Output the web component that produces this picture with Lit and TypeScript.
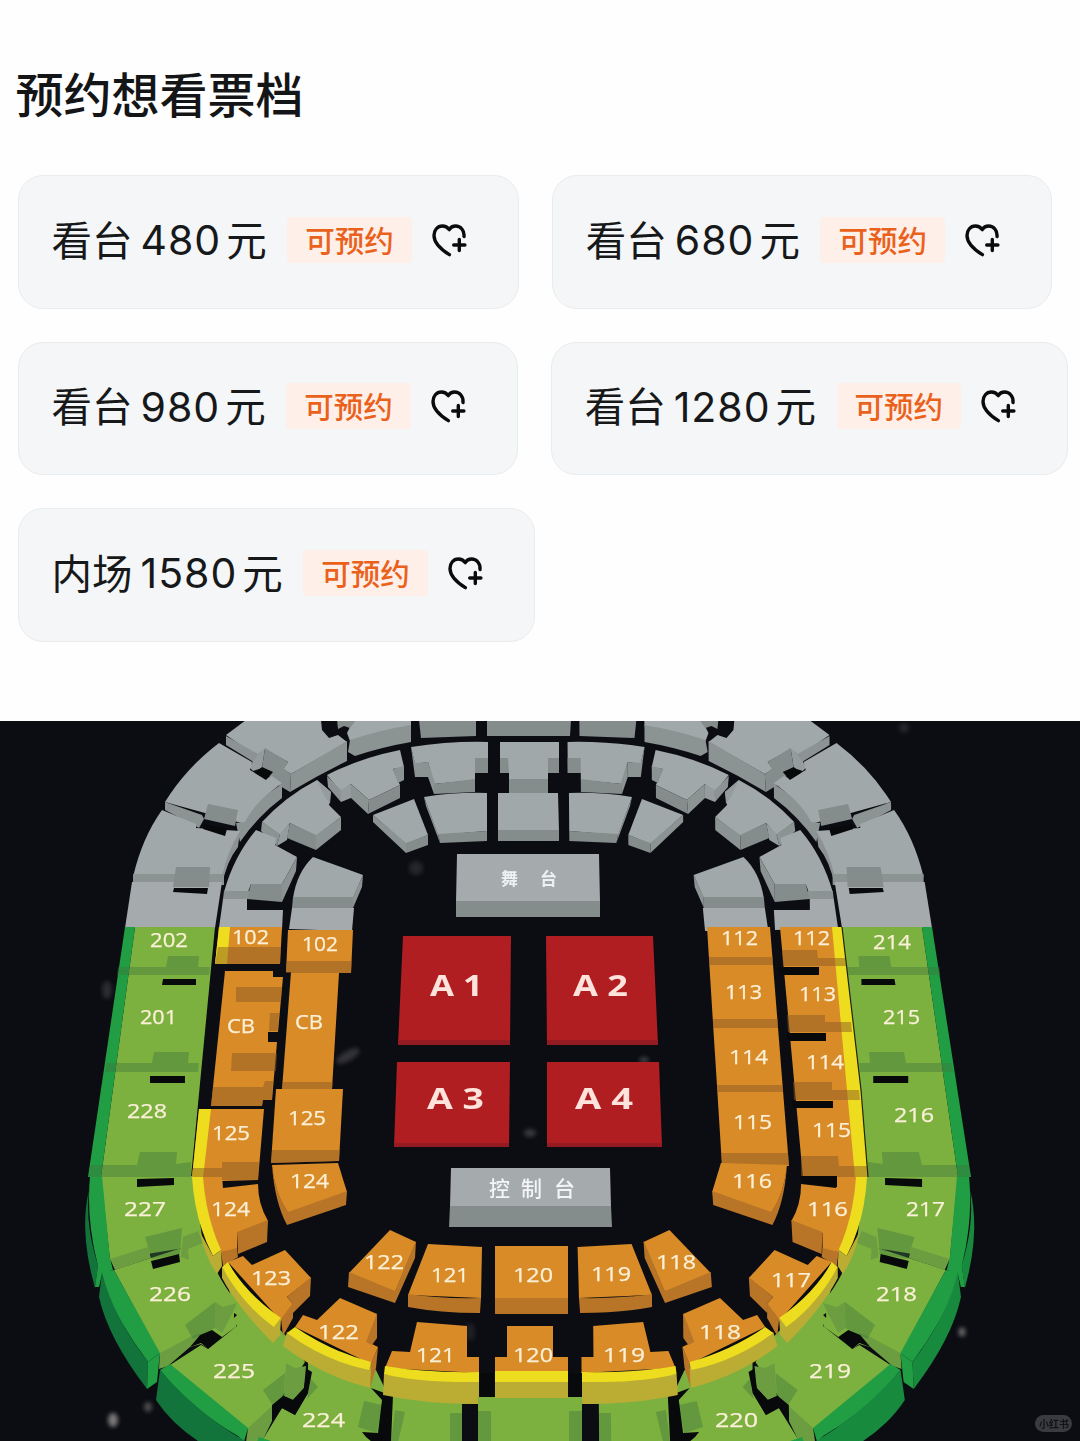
import { css, html, LitElement, svg } from 'lit';
import { customElement, property } from 'lit/decorators.js';

// [class, path]
type Shape = [string, string];
// [text, left, baseline, width]
type Label = [string, number, number, number];

// Everything that both sides of the arena share, drawn for the left side.
const HALF: Shape[] = [
    // outer ring, grey
    ['top', 'M226 735L246 720H321L322 730 329 738 338 735 347 742 291 774 283 769 288 762 265 749 258 757Z'],
    ['face', 'M226 736L258 754 261 751 257 768 252 761 226 745Z'],
    ['lit', 'M258 755L265 748 262 768 253 771 249 767Z'],
    ['dark', 'M265 748L288 762 284 769 291 774 290 792 275 783 262 768Z'],
    ['face', 'M291 774L347 741V761Q318 775 290 792Z'],
    ['top', 'M219 743L252 762 250 770 265 779 272 776 282 783Q256 802 245 824L165 802Q186 768 219 743Z'],
    ['hole', 'M262 767L273 772 266 780 255 773Z'],
    ['face', 'M165 802L202 815 204 819 199 828 165 810Z'],
    ['face', 'M282 784V798Q258 816 240 842L236 823 245 822Q256 800 282 784Z'],
    ['top', 'M162 810L196 824 196 828 240 831 223 877H133Q142 838 162 810Z'],
    ['dark', 'M208 804L238 810 235 826 204 819Z'],
    ['hole', 'M204 824L227 829 225 836 203 829Z'],
    ['face', 'M133 874H224V885H133Z'],
    ['face', 'M240 831L238 847Q226 862 222 886V876Q228 850 240 831Z'],
    ['floor', 'M132 882H222L215 928H125Z'],
    ['dark', 'M176 867H210L209 887H173Z'],
    ['hole', 'M174 888H208L207 894 173 892Z'],
    ['top', 'M353 721H411V726L350 741 347 733Z'],
    ['dark', 'M337 720H356L350 728 344 726 338 729Z'],
    ['face', 'M350 740Q380 730 411 725V742Q382 747 355 756L348 752Z'],
    ['dark', 'M419 720H476V736L421 738Z'],

    // middle ring, grey
    ['top', 'M327 775Q360 758 400 750L404 767 393 769 400 785 369 800 351 784 341 792Z'],
    ['face', 'M327 776L341 790V802L328 787Z'],
    ['lit', 'M341 790L351 784V798L341 802Z'],
    ['face', 'M351 784L369 800 368 814 351 798Z'],
    ['dark', 'M369 800L400 785V798L368 814Z'],
    ['face', 'M393 769L404 766V780L398 783Z'],
    ['top', 'M411 747Q450 741 488 742V773H475V780L434 784 428 762 415 764Z'],
    ['face', 'M411 747L415 763 428 762V777H415Z'],
    ['face', 'M428 762L435 783 434 794 428 777Z'],
    ['dark', 'M434 784L475 779V792L434 794Z'],
    ['dark', 'M475 758H488V773H475Z'],
    ['top', 'M317 780L331 792 329 805 341 817 316 836 290 823 280 835 262 822Q286 796 317 780Z'],
    ['face', 'M262 822L280 834 277 846 261 831Z'],
    ['lit', 'M280 834L290 823 287 840 277 846Z'],
    ['dark', 'M290 823L316 835V850L287 838Z'],
    ['face', 'M316 835L341 817V830L316 850Z'],
    ['lit', 'M317 780L331 792 330 804 325 797Z'],
    ['top', 'M256 830L276 838 275 845 297 857 282 884H251L248 892H224Q234 856 256 830Z'],
    ['face', 'M224 891H249V899H223Z'],
    ['dark', 'M251 884H282V902L247 899Z'],
    ['face', 'M297 857L296 871 282 902V884Z'],
    ['floor', 'M223 899H247V910H283L282 930 219 928Z'],

    // inner row, grey
    ['top', 'M414 799L428 835 406 844 373 815Z'],
    ['face', 'M373 815L406 843V853L373 822Z'],
    ['dark', 'M406 843L428 835V845L406 853Z'],
    ['top', 'M424 797Q455 792 487 793V831L438 835Z'],
    ['face', 'M424 797L438 834 440 843 426 806Z'],
    ['dark', 'M438 834L487 831V841L440 843Z'],
    ['top', 'M313 857L363 875 353 898H293Q297 872 313 857Z'],
    ['dark', 'M293 897H353V908H292Z'],
    ['face', 'M363 875L362 887 353 908V897Z'],
    ['floor', 'M292 908H354L352 931 289 929Z'],

    // outer ring, green column
    ['green', 'M135 927H215L191 1177H101Z'],
    ['rim', 'M125 927H135L101 1177H88Z'],
    ['shade', 'M118 967H166L168 956H199L198 967H210L209 975H117Z'],
    ['hole', 'M163 979H196V985H162Z'],
    ['shade', 'M107 1063H152L154 1052H189L188 1063H199L198 1072H105Z'],
    ['hole', 'M150 1076H185V1083H150Z'],

    // outer ring, green bend
    ['green', 'M101 1176H194L203 1245 110 1260Z'],
    ['rim', 'M90 1176H102L110 1259 98 1266Q86 1220 90 1176Z'],
    ['rim-face', 'M89 1190Q85 1225 98 1265L95 1288Q79 1232 89 1190Z'],
    ['rim', 'M98 1265L110 1258 113 1270 102 1274 99 1287 95 1287Z'],
    ['shade', 'M90 1165H137L140 1152H177L176 1164 191 1162V1177H89Z'],
    ['hole', 'M137 1179L174 1178V1185L137 1187Z'],
    ['green', 'M114 1270L203 1241Q220 1285 242 1308L235 1330 208 1349 201 1344 160 1355Z'],
    ['mild', 'M110 1259L148 1247 151 1258 115 1270Z'],
    ['shade', 'M145 1237L182 1228 180 1254 152 1259Z'],
    ['mild', 'M183 1237L198 1231 203 1243 188 1249 189 1260 181 1257Z'],
    ['hole', 'M151 1261L179 1254 180 1262 153 1269Z'],
    ['rim', 'M102 1272L114 1270 160 1353 148 1362Q118 1322 102 1283Z'],
    ['rim-face', 'M102 1272Q112 1315 148 1362L147 1389Q108 1338 99 1297Z'],
    ['rim', 'M148 1362L160 1353 157 1382 147 1389Z'],
    ['green', 'M170 1365L201 1345 208 1349 237 1326 226 1275 290 1340 305 1362 272 1412 248 1429Z'],
    ['mild', 'M160 1353L192 1336 201 1333 190 1347 168 1366 159 1369Z'],
    ['shade', 'M185 1325L215 1302V1328L193 1339Z'],
    ['mild', 'M215 1302L223 1307 237 1303 233 1312 222 1333 215 1328Z'],
    ['hole', 'M190 1347L200 1335 212 1330 222 1337 237 1326 208 1349 201 1343Z'],
    ['hole', 'M234 1313L237 1315 234 1318Z'],
    ['rim', 'M160 1370L170 1364 248 1428 244 1442 238 1436Q192 1410 160 1370Z'],
    ['rim-face', 'M160 1370Q197 1413 245 1441H198Q171 1423 156 1400Z'],
    ['mild', 'M248 1428L272 1406V1421L262 1442H246Z'],
    ['green', 'M262 1441L282 1408 295 1415 308 1393V1360L290 1345 376 1370 386 1391 380 1442Z'],
    ['rim', 'M259 1437L274 1442H257Z'],
    ['shade', 'M263 1390L285 1373 284 1397 272 1404Z'],
    ['mild', 'M286 1363L295 1368 306 1366 304 1388 293 1400 284 1396Z'],
    ['hole', 'M307 1369L312 1372 308 1393 295 1415 282 1408 272 1422V1405L283 1396 293 1400 304 1388Z'],
    ['shade', 'M311 1379L318 1387 307 1399Z'],
    ['shade', 'M364 1401L382 1405 377 1433 358 1427Z'],
    ['hole', 'M362 1432L378 1433 382 1400 371 1388 395 1397 391 1442H372L366 1437Z'],
    ['green', 'M393 1395L479 1398V1404H462V1442H391Z'],
    ['shade', 'M395 1410L405 1412 398 1442H391Z'],
    ['shade', 'M450 1413H462V1442H450Z'],

    // middle ring, orange bend with the yellow edge
    ['orange', 'M202 1176H222L223 1188 258 1184Q258 1204 268 1221L237 1233V1251L221 1252Q205 1215 202 1176Z'],
    ['amber', 'M237 1232L268 1220 267 1242 238 1254Z'],
    ['amber', 'M221 1252L237 1248 238 1257 223 1266Z'],
    ['yellow', 'M192 1177H203Q206 1217 221 1250L213 1256Q195 1222 192 1177Z'],
    ['olive', 'M213 1256L221 1250 222 1266 217 1274Q204 1255 200 1232Z'],
    ['orange', 'M228 1262L243 1256 252 1265 285 1250 311 1278 287 1297 293 1304 281 1321Z'],
    ['amber', 'M311 1277L310 1296 293 1313V1304L287 1297Z'],
    ['amber', 'M293 1303V1318L283 1336 281 1319Z'],
    ['olive', 'M222 1267Q243 1300 274 1326L281 1318 280 1335 273 1343Q238 1308 222 1278Z'],
    ['yellow', 'M222 1267L228 1262Q245 1293 281 1318L274 1327Q243 1305 222 1267Z'],
    ['orange', 'M295 1327L303 1315 317 1320 340 1298 377 1314 372 1344 378 1347 371 1364Z'],
    ['amber', 'M377 1313V1338L372 1345 366 1342Z'],
    ['amber', 'M378 1347L376 1368 370 1388 371 1363Z'],
    ['olive', 'M287 1332Q325 1360 371 1364L370 1388Q320 1375 283 1346Z'],
    ['yellow', 'M287 1333L295 1327Q330 1351 371 1362L369 1370Q325 1361 287 1333Z'],
    ['orange', 'M417 1322L467 1326V1357H479V1373L385 1368 392 1351 410 1352Z'],
    ['olive', 'M384 1374L479 1381V1398L478 1404Q425 1404 383 1395Z'],
    ['yellow', 'M385 1366Q425 1373 479 1372V1382Q420 1383 384 1374Z'],

    // inner row, orange
    ['orange', 'M272 1165L338 1163 347 1192 288 1213Q274 1192 272 1165Z'],
    ['amber', 'M288 1212L347 1191 346 1205 287 1225Q275 1203 272 1166Q276 1195 288 1212Z'],
    ['orange', 'M390 1230L416 1242 395 1292 349 1273Z'],
    ['amber', 'M349 1272L395 1291 416 1241 415 1258 395 1303 348 1287Z'],
    ['orange', 'M428 1244L482 1247 481 1298 408 1295Z'],
    ['amber', 'M408 1294Q440 1299 481 1298L480 1313Q440 1313 408 1307Z']
];

const LEFT: Shape[] = [
    ['orange', 'M219 927H282L280 964H215Z'],
    ['yellow', 'M219 927H230L227 964H215Z'],
    ['tint', 'M218 947H281L280 964H215Z'],
    ['orange', 'M225 971H273V977H283L278 1032H268V1042H277L272 1100H263L262 1106H211Z'],
    ['tint', 'M236 987H282L281 1002H236Z'],
    ['tint', 'M270 1013H279L278 1031H269Z'],
    ['tint', 'M232 1053H277L276 1071H231Z'],
    ['tint', 'M213 1087H263L265 1081H273L272 1100H263L262 1106H211Z'],
    ['orange', 'M199 1109H264L258 1180 222 1181 203 1178 192 1177Z'],
    ['yellow', 'M199 1109H211L203 1178H192Z'],
    ['tint', 'M193 1168H222V1162H259L258 1180H222V1177H192Z'],
    ['orange', 'M288 930H353L351 973H339L332 1089H282L291 972H286Z'],
    ['tint', 'M287 961H352L351 973H286Z'],
    ['tint', 'M283 1082H333L332 1089H282Z'],
    ['orange', 'M276 1089H343L339 1161 271 1163Z'],
    ['tint', 'M272 1150H340L339 1161 271 1163Z']
];

const RIGHT: Shape[] = [
    ['orange', 'M707 927H770L789 1166H722Z'],
    ['tint', 'M709 957H773V965H709Z'],
    ['tint', 'M713 1019H778V1028H713Z'],
    ['tint', 'M717 1085H783V1092H718Z'],
    ['tint', 'M721 1153H788L789 1165 722 1163Z'],
    ['orange', 'M780 927H842L862 1100 868 1177H838L803 1178Z'],
    ['yellow', 'M832 927H842L862 1100 868 1177H855Z'],
    ['tint', 'M782 950H817L818 958H845L846 966H783Z'],
    ['hole', 'M778 967H819V975H780Z'],
    ['tint', 'M787 1015H825V1022H851L852 1032H788Z'],
    ['hole', 'M786 1033H826V1041H788Z'],
    ['tint', 'M793 1082H832V1090H859L860 1100H794Z'],
    ['hole', 'M792 1101H833V1108H793Z'],
    ['tint', 'M801 1156H838L839 1166H867L868 1177H801Z'],
    ['hole', 'M800 1176H837V1187L803 1183Z'],
    ['seam', 'M842 927L861 1090 868 1177']
];

const MIDDLE: Shape[] = [
    ['dark', 'M487 720H571L570 736H487Z'],
    ['top', 'M500 742H559V773H548V780H509V773H500Z'],
    ['dark', 'M500 758H508L509 773H500Z'],
    ['dark', 'M548 758H559V773H548Z'],
    ['dark', 'M509 779H548V793H509Z'],
    ['top', 'M498 793H558L559 831H498Z'],
    ['dark', 'M498 830H559V841H498Z'],
    ['floor', 'M457 854H599L600 902H456Z'],
    ['dark', 'M456 901H600V917H456Z'],
    ['floor', 'M451 1168H610L611 1207H450Z'],
    ['dark', 'M450 1206H611L612 1227H449Z'],
    ['red', 'M403 936H511L510 1045H398Z'],
    ['red-face', 'M398 1040H510V1045H398Z'],
    ['red', 'M546 936H653L658 1045H547Z'],
    ['red-face', 'M547 1040H658V1045H547Z'],
    ['red', 'M397 1062H510L509 1147H394Z'],
    ['red-face', 'M394 1143H509V1147H394Z'],
    ['red', 'M547 1062H659L662 1147H547Z'],
    ['red-face', 'M547 1143H662V1147H547Z'],
    ['green', 'M478 1397H582V1442H478Z'],
    ['shade', 'M478 1411H491V1442H478Z'],
    ['shade', 'M569 1411H582V1442H569Z'],
    ['orange', 'M495 1246H568V1299H495Z'],
    ['amber', 'M495 1298H568V1314H495Z'],
    ['orange', 'M507 1326H553V1357H568V1372H495V1357H507Z'],
    ['yellow', 'M495 1371H568V1382H495Z'],
    ['olive', 'M495 1382H568V1398H495Z'],
    ['hole', 'M480 1373H494V1397H480Z'],
    ['hole', 'M569 1373H582V1397H569Z']
];

const LABELS: Label[] = [
    ['202', 150, 947, 38],
    ['201', 140, 1024, 37],
    ['228', 127, 1118, 40],
    ['227', 124, 1216, 42],
    ['226', 149, 1301, 42],
    ['225', 213, 1378, 42],
    ['224', 302, 1427, 43],
    ['220', 715, 1427, 43],
    ['219', 809, 1378, 42],
    ['218', 876, 1301, 41],
    ['217', 906, 1216, 39],
    ['216', 894, 1122, 40],
    ['215', 883, 1024, 37],
    ['214', 873, 949, 38],
    ['102', 232, 944, 37],
    ['102', 302, 951, 36],
    ['CB', 227, 1033, 28],
    ['CB', 295, 1029, 28],
    ['125', 212, 1140, 38],
    ['125', 288, 1125, 38],
    ['124', 211, 1216, 39],
    ['124', 290, 1188, 39],
    ['123', 251, 1285, 40],
    ['122', 318, 1339, 41],
    ['122', 364, 1269, 40],
    ['121', 431, 1282, 38],
    ['121', 416, 1362, 39],
    ['120', 513, 1282, 40],
    ['120', 513, 1362, 40],
    ['119', 591, 1281, 40],
    ['119', 603, 1362, 42],
    ['118', 656, 1269, 40],
    ['118', 699, 1339, 42],
    ['117', 771, 1287, 40],
    ['116', 732, 1188, 40],
    ['116', 807, 1216, 41],
    ['115', 733, 1129, 39],
    ['115', 812, 1137, 39],
    ['114', 729, 1064, 39],
    ['114', 806, 1069, 38],
    ['113', 725, 999, 37],
    ['113', 799, 1001, 37],
    ['112', 721, 945, 37],
    ['112', 793, 945, 37]
];

const FLOOR_LABELS: Label[] = [
    ['A 1', 430, 996, 53],
    ['A 2', 573, 996, 55],
    ['A 3', 427, 1109, 57],
    ['A 4', 575, 1109, 58]
];

const shapes = (list: Shape[]) => list.map(([name, d]) => svg`<path class=${name} d=${d} />`);

const labels = (list: Label[]) =>
    list.map(
        ([text, x, y, width]) => svg`
            <text x=${x} y=${y} textLength=${width} lengthAdjust="spacingAndGlyphs">${text}</text>
        `
    );

@customElement('seat-map')
export class SeatMap extends LitElement {
    static styles = css`
        :host {
            display: block;
            height: 720px;
            background: #0c0d13;
        }

        svg {
            display: block;
        }

        .top {
            fill: #a1a8a9;
        }

        .floor {
            fill: #a5aaad;
        }

        .lit {
            fill: #949c9d;
        }

        .face {
            fill: #8b9393;
        }

        .dark {
            fill: #848c8c;
        }

        .hole {
            fill: #07090b;
        }

        .green {
            fill: #7db13f;
        }

        .shade {
            fill: #40743f;
            fill-opacity: 0.42;
        }

        .mild {
            fill: #6c9e41;
        }

        .rim {
            fill: #219d43;
        }

        .rim-face {
            fill: #12743a;
        }

        .right .rim-face {
            fill: #188a3e;
        }

        .orange {
            fill: #d98b27;
        }

        .amber {
            fill: #b87527;
        }

        .tint {
            fill: #8c5c28;
            fill-opacity: 0.5;
        }

        .yellow {
            fill: #eddd1e;
        }

        .olive {
            fill: #bbad34;
        }

        .red {
            fill: #b01e22;
        }

        .red-face {
            fill: #951b22;
        }

        .seam {
            fill: none;
            stroke: #1c2413;
            stroke-width: 1.2;
        }

        .speck {
            fill: #8d8b8b;
            filter: blur(2px);
        }

        text {
            font-family: 'Open Sans', 'Noto Sans CJK SC', sans-serif;
        }

        .seats {
            font-size: 19.5px;
            fill: #fbf0d8;
            stroke: #fbf0d8;
            stroke-width: 0.25;
        }

        .ground {
            font-size: 28px;
            font-weight: 700;
            fill: #fde3dc;
        }

        .stage {
            font-size: 17px;
            font-weight: 700;
            fill: #eef1f2;
        }

        .console {
            font-size: 21px;
            font-weight: 500;
            fill: #f3f5f6;
        }

        .mark {
            fill: #3a3b40;
        }

        .mark-text {
            font-size: 10px;
            font-weight: 700;
            fill: #121317;
        }
    `;

    render() {
        return html`
            <svg width="1080" height="720" viewBox="0 721 1080 720">
                <g class="speck">
                    <ellipse cx="107" cy="990" rx="5" ry="9" opacity="0.25" />
                    <ellipse cx="348" cy="1056" rx="13" ry="5" opacity="0.3" transform="rotate(-30 348 1056)" />
                    <ellipse cx="416" cy="868" rx="7" ry="7" opacity="0.2" />
                    <ellipse cx="904" cy="728" rx="5" ry="5" opacity="0.2" />
                    <ellipse cx="148" cy="1407" rx="4" ry="5" opacity="0.5" />
                    <ellipse cx="113" cy="1420" rx="5" ry="7" opacity="0.85" />
                    <ellipse cx="962" cy="1332" rx="3.5" ry="4.5" opacity="0.7" />
                    <ellipse cx="530" cy="1133" rx="6" ry="4" opacity="0.35" />
                    <ellipse cx="644" cy="1060" rx="5" ry="3" opacity="0.4" />
                    <ellipse cx="470" cy="1332" rx="5" ry="9" opacity="0.15" />
                </g>
                <g>${shapes(HALF)}</g>
                <g class="right" transform="matrix(-1 0 0.008 1 1049.6 0)">${shapes(HALF)}</g>
                ${shapes(LEFT)} ${shapes(RIGHT)} ${shapes(MIDDLE)}
                <g class="seats">${labels(LABELS)}</g>
                <g class="ground">${labels(FLOOR_LABELS)}</g>
                <text class="stage" y="884.5"><tspan x="501">舞</tspan><tspan x="540">台</tspan></text>
                <text class="console" y="1196">
                    <tspan x="489">控</tspan><tspan x="521">制</tspan><tspan x="554">台</tspan>
                </text>
                <rect class="mark" x="1035" y="1415" width="37" height="17" rx="8.5" />
                <text class="mark-text" x="1039" y="1427.5">小红书</text>
            </svg>
        `;
    }
}

@customElement('price-card')
export class PriceCard extends LitElement {
    static styles = css`
        :host {
            display: flex;
            align-items: center;
            box-sizing: border-box;
            height: 133.5px;
            padding: 0 51px 6px 33px;
            border: 1.5px solid #e9ecee;
            border-radius: 25px;
            background: #f4f6f7;
            color: #17181a;
            font-size: 40.5px;
            line-height: 1;
            white-space: nowrap;
        }

        .price {
            margin: 4px 5px 0 8px;
            font-family: Inter, sans-serif;
            font-size: 41px;
            letter-spacing: 1px;
        }

        .tag {
            margin: 2px 20px 0 20.5px;
            padding: 0 18px 2px;
            border-radius: 4px;
            background: #feefe8;
            color: #ea611c;
            font-size: 29.5px;
            font-weight: 500;
            line-height: 44px;
        }

        svg {
            display: block;
            margin-top: 3px;
            fill: none;
            stroke: #0b0b0c;
            stroke-width: 3.4;
            stroke-linecap: round;
            stroke-linejoin: round;
        }
    `;

    @property()
    area = '';

    @property({ type: Number })
    price = 0;

    render() {
        return html`
            <span>${this.area}</span>
            <span class="price">${this.price}</span>
            <span>元</span>
            <span class="tag">可预约</span>
            <svg width="35" height="33" viewBox="0 0 35 33">
                <path
                    d="M32 12.5C32.6 6.4 28.6 2 23.6 2C20.8 2 18.6 3.3 17.2 5.6C15.6 3.3 13.2 2 10.4 2C5.4 2 2 6.2 2 11.4C2 18.6 8.4 25 17.4 30.6"
                />
                <path d="M27.3 15.4V26.6M21.7 21H32.9" />
            </svg>
        `;
    }
}

@customElement('app-root')
export class AppRoot extends LitElement {
    static styles = css`
        :host {
            display: block;
            width: 1080px;
            height: 1441px;
            overflow: hidden;
            background: #fefefe;
            font-family: 'Noto Sans CJK SC', sans-serif;
        }

        .booking {
            box-sizing: border-box;
            height: 721px;
            padding: 62px 0 0 17.5px;
        }

        h1 {
            margin: 0 0 53px -2px;
            color: #141517;
            font-size: 48px;
            font-weight: 500;
            line-height: 60px;
        }

        .cards {
            display: flex;
            flex-wrap: wrap;
            gap: 33px;
        }
    `;

    @property({ attribute: false })
    tickets = [
        { area: '看台', price: 480 },
        { area: '看台', price: 680 },
        { area: '看台', price: 980 },
        { area: '看台', price: 1280 },
        { area: '内场', price: 1580 }
    ];

    render() {
        return html`
            <section class="booking">
                <h1>预约想看票档</h1>
                <div class="cards">
                    ${this.tickets.map(
                        (ticket) => html`<price-card area=${ticket.area} price=${ticket.price}></price-card>`
                    )}
                </div>
            </section>
            <seat-map></seat-map>
        `;
    }
}
